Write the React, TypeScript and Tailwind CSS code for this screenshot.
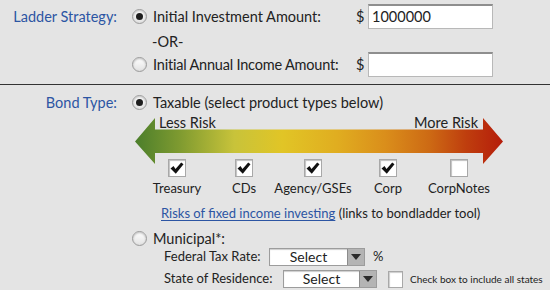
import React from "react"

function Radio({ checked }: { checked?: boolean }) {
  return (
    <span className="w-[15px] h-[15px] rounded-full border border-[#9a9a9a] bg-gradient-to-b from-white to-[#e2e2e2] shadow-[inset_0_1px_2px_rgba(0,0,0,0.25)] flex items-center justify-center shrink-0">
      {checked && <span className="w-[7px] h-[7px] rounded-full bg-[#1e1e1e]" />}
    </span>
  )
}

function Check({ checked }: { checked?: boolean }) {
  return (
    <span className="w-[18px] h-[18px] bg-white border border-[#a8a8a8] shadow-[inset_1px_1px_1px_rgba(0,0,0,0.25)] flex items-center justify-center">
      {checked && (
        <svg width="14" height="12" viewBox="0 0 14 12">
          <path d="M0.5 6.5 L3.5 4 L5.5 7 L11.2 0.5 L13.5 2.2 L5.8 11.8 Z" fill="#111" />
        </svg>
      )}
    </span>
  )
}

function Select({ width }: { width: string }) {
  return (
    <span className={`${width} h-[18px] shrink-0 flex bg-white border border-[#9c9c9c] shadow-[inset_0_1px_1px_rgba(0,0,0,0.2)]`}>
      <span className="flex-1 text-center leading-[16px] text-[14px]">Select</span>
      <span className="w-[17px] bg-[#b4b4b4] border-l border-[#8c8c8c] flex items-center justify-center">
        <svg width="10" height="6" viewBox="0 0 10 6">
          <path d="M0 0 H10 L5 6 Z" fill="#2a2a2a" />
        </svg>
      </span>
    </span>
  )
}

const products = [
  { name: "Treasury", w: "w-[66px]", checked: true },
  { name: "CDs", w: "w-[68px]", checked: true },
  { name: "Agency/GSEs", w: "w-[70px]", checked: true },
  { name: "Corp", w: "w-[80px]", checked: true },
  { name: "CorpNotes", w: "w-[62px]", checked: false },
]

export default function App() {
  return (
    <div className="w-[550px] h-[290px] bg-[#e4e4e4] text-[#222] text-[14.5px] font-['Lato',sans-serif] overflow-hidden">
      {/* ladder strategy */}
      <div className="h-[85px] border-b border-[#333] pt-[4px]">
        <div className="flex items-center h-[25px]">
          <span className="w-[118px] text-right text-[#2c55a3] pr-[1px] whitespace-nowrap">Ladder Strategy:</span>
          <span className="ml-[14px]"><Radio checked /></span>
          <span className="ml-[6px] w-[203px] whitespace-nowrap">Initial Investment Amount:</span>
          <span className="w-[12px]">$</span>
          <span className="w-[125px] h-[25px] bg-white border border-[#b8b8b8] border-t-[#8e8e8e] border-t-2 pl-[3px] leading-[22px]">1000000</span>
        </div>
        <div className="pl-[152px] h-[23px] leading-[25px]">-OR-</div>
        <div className="flex items-center h-[25px]">
          <span className="w-[132px]" />
          <Radio />
          <span className="ml-[6px] w-[203px] whitespace-nowrap tracking-[-0.2px]">Initial Annual Income Amount:</span>
          <span className="w-[12px]">$</span>
          <span className="w-[125px] h-[25px] bg-white border border-[#b8b8b8] border-t-[#8e8e8e] border-t-2" />
        </div>
      </div>

      {/* bond type */}
      <div className="pt-[9px]">
        <div className="flex items-center h-[17px]">
          <span className="w-[118px] text-right text-[#2c55a3] pr-[1px]">Bond Type:</span>
          <span className="ml-[14px]"><Radio checked /></span>
          <span className="ml-[6px]">Taxable (select product types below)</span>
        </div>

        <div className="relative ml-[134px] mt-[6px] w-[370px] h-[47px]">
          <svg width="370" height="47" viewBox="0 0 370 47">
            <defs>
              <linearGradient id="risk" x1="0" x2="1" y1="0" y2="0">
                <stop offset="0" stopColor="#4b7e2b" />
                <stop offset="0.12" stopColor="#7e9a30" />
                <stop offset="0.27" stopColor="#c8c33a" />
                <stop offset="0.4" stopColor="#e1c526" />
                <stop offset="0.55" stopColor="#e0ad20" />
                <stop offset="0.68" stopColor="#da8e1b" />
                <stop offset="0.8" stopColor="#cd6a14" />
                <stop offset="0.9" stopColor="#bf3e0e" />
                <stop offset="1" stopColor="#b51d0b" />
              </linearGradient>
            </defs>
            <path d="M1 24.5 L21 1 L21 12.5 L349 12.5 L349 1 L369 24.5 L349 47 L349 36 L21 36 L21 47 Z" fill="url(#risk)" />
          </svg>
          <div className="absolute top-0 left-0 right-0 flex justify-between leading-[12px] pl-[25px] pr-[26px]">
            <span className="bg-[#e4e4e4] pr-[3px]">Less Risk</span>
            <span className="bg-[#e4e4e4] pl-[3px]">More Risk</span>
          </div>
        </div>

        <div className="flex ml-[144px] -mt-[5px]">
          {products.map((p) => (
            <div key={p.name} className={`${p.w} flex flex-col items-center`}>
              <Check checked={p.checked} />
              <span className="mt-[4px] leading-[15px] whitespace-nowrap text-[13px]">{p.name}</span>
            </div>
          ))}
        </div>

        <div className="pl-[161px] mt-[9px] leading-[17px] whitespace-nowrap text-[13px]">
          <a className="text-[#2c55a3] underline underline-offset-2">Risks of fixed income investing</a> (links to bondladder tool)
        </div>

        <div className="flex items-center h-[17px] mt-[8px]">
          <span className="ml-[132px]"><Radio /></span>
          <span className="ml-[6px]">Municipal*:</span>
        </div>

        <div className="flex items-center ml-[164px] mt-[1px] h-[18px] text-[13px]">
          <span className="w-[105px] whitespace-nowrap">Federal Tax Rate:</span>
          <Select width="w-[96px]" />
          <span className="ml-[8px]">%</span>
        </div>

        <div className="flex items-center ml-[164px] mt-[4px] h-[18px] text-[13px]">
          <span className="w-[119px] whitespace-nowrap">State of Residence:</span>
          <Select width="w-[94px]" />
          <span className="ml-[11px] w-[15px] h-[17px] shrink-0 bg-white border border-[#a8a8a8] shadow-[inset_1px_1px_1px_rgba(0,0,0,0.2)]" />
          <span className="ml-[7px] text-[10px] whitespace-nowrap">Check box to include all states</span>
        </div>
      </div>
    </div>
  )
}
